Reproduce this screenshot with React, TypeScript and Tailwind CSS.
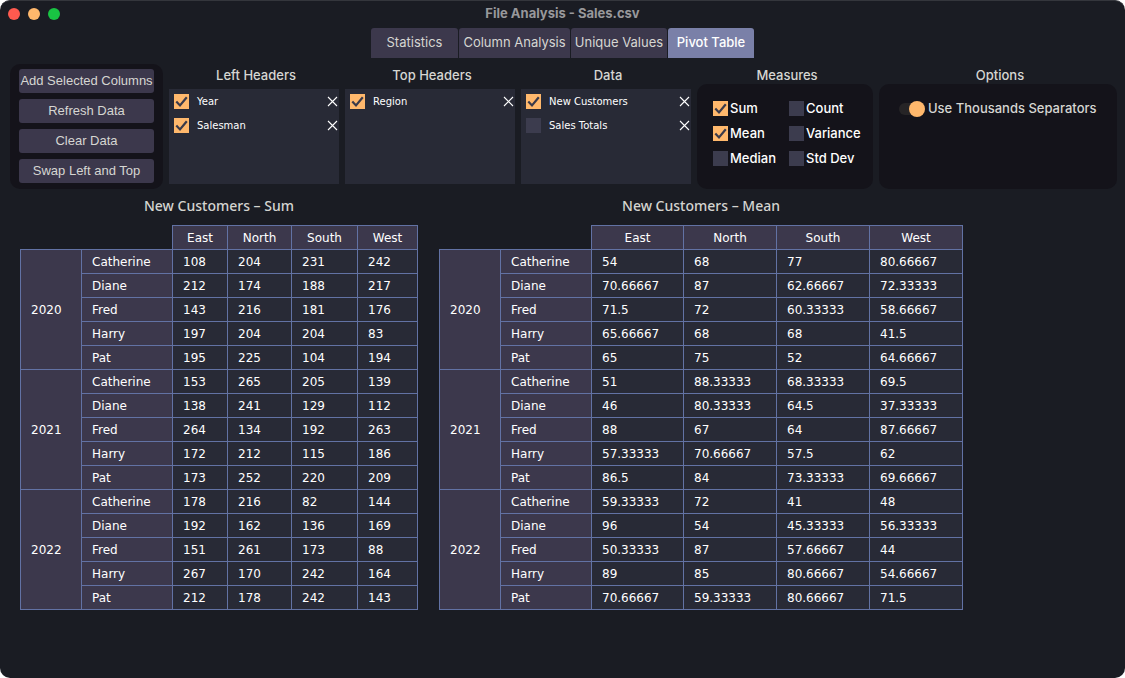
import { Fragment } from "react";

interface Field {
  name: string;
  checked: boolean;
}

interface Group {
  year: string;
  rows: string[][];
}

const REGIONS = ["East", "North", "South", "West"];
const SALESMEN = ["Catherine", "Diane", "Fred", "Harry", "Pat"];

const TABS = [
  { name: "Statistics", width: "w-[87px]" },
  { name: "Column Analysis", width: "w-[111px]" },
  { name: "Unique Values", width: "w-24" },
  { name: "Pivot Table", width: "w-[86px]" },
];

const ACTIONS = ["Add Selected Columns", "Refresh Data", "Clear Data", "Swap Left and Top"];

const FIELD_LISTS: { title: string; fields: Field[] }[] = [
  {
    title: "Left Headers",
    fields: [
      { name: "Year", checked: true },
      { name: "Salesman", checked: true },
    ],
  },
  { title: "Top Headers", fields: [{ name: "Region", checked: true }] },
  {
    title: "Data",
    fields: [
      { name: "New Customers", checked: true },
      { name: "Sales Totals", checked: false },
    ],
  },
];

const MEASURES: Field[] = [
  { name: "Sum", checked: true },
  { name: "Count", checked: false },
  { name: "Mean", checked: true },
  { name: "Variance", checked: false },
  { name: "Median", checked: false },
  { name: "Std Dev", checked: false },
];

const SUMS: Group[] = [
  {
    year: "2020",
    rows: [
      ["108", "204", "231", "242"],
      ["212", "174", "188", "217"],
      ["143", "216", "181", "176"],
      ["197", "204", "204", "83"],
      ["195", "225", "104", "194"],
    ],
  },
  {
    year: "2021",
    rows: [
      ["153", "265", "205", "139"],
      ["138", "241", "129", "112"],
      ["264", "134", "192", "263"],
      ["172", "212", "115", "186"],
      ["173", "252", "220", "209"],
    ],
  },
  {
    year: "2022",
    rows: [
      ["178", "216", "82", "144"],
      ["192", "162", "136", "169"],
      ["151", "261", "173", "88"],
      ["267", "170", "242", "164"],
      ["212", "178", "242", "143"],
    ],
  },
];

const MEANS: Group[] = [
  {
    year: "2020",
    rows: [
      ["54", "68", "77", "80.66667"],
      ["70.66667", "87", "62.66667", "72.33333"],
      ["71.5", "72", "60.33333", "58.66667"],
      ["65.66667", "68", "68", "41.5"],
      ["65", "75", "52", "64.66667"],
    ],
  },
  {
    year: "2021",
    rows: [
      ["51", "88.33333", "68.33333", "69.5"],
      ["46", "80.33333", "64.5", "37.33333"],
      ["88", "67", "64", "87.66667"],
      ["57.33333", "70.66667", "57.5", "62"],
      ["86.5", "84", "73.33333", "69.66667"],
    ],
  },
  {
    year: "2022",
    rows: [
      ["59.33333", "72", "41", "48"],
      ["96", "54", "45.33333", "56.33333"],
      ["50.33333", "87", "57.66667", "44"],
      ["89", "85", "80.66667", "54.66667"],
      ["70.66667", "59.33333", "80.66667", "71.5"],
    ],
  },
];

function Checkbox({ checked }: { checked: boolean }) {
  return (
    <span className="relative block size-[15px] shrink-0">
      <input
        type="checkbox"
        defaultChecked={checked}
        className="peer block size-[15px] appearance-none bg-[#3c3c4e] checked:bg-[#ffb86c]"
      />
      <svg
        viewBox="0 0 15 15"
        className="pointer-events-none absolute inset-0 hidden peer-checked:block"
        fill="none"
        stroke="#3a3a4a"
        strokeWidth="2.2"
      >
        <path d="M2.3 7.4 L6 11.4 L12.8 3.2" />
      </svg>
    </span>
  );
}

function FieldList({ title, fields }: { title: string; fields: Field[] }) {
  return (
    <section className="w-[170px] flex flex-col">
      <h2 className="h-[25px] pl-1 text-center font-medium leading-[22px]">{title}</h2>
      <ul className="h-[95px] bg-[#282a36] font-['DejaVu_Sans',sans-serif] text-[10px] text-white">
        {fields.map((field) => (
          <li key={field.name} className="h-6 flex items-center justify-between pl-[5px] pr-px">
            <label className="flex items-center gap-2">
              <Checkbox checked={field.checked} />
              {field.name}
            </label>
            <button type="button" aria-label={`Remove ${field.name}`}>
              <svg viewBox="0 0 11 11" className="size-[11px]" stroke="currentColor" strokeWidth="1.1">
                <path d="M1 1 L10 10 M10 1 L1 10" />
              </svg>
            </button>
          </li>
        ))}
      </ul>
    </section>
  );
}

function PivotTable({ title, groups, columns }: { title: string; groups: Group[]; columns: string[] }) {
  return (
    <section>
      <h2 className="h-[31px] text-center font-['Noto_Sans',sans-serif] text-[14px] font-medium leading-6 text-[#d4d4d0]">
        {title}
      </h2>
      <table className="table-fixed border-collapse font-['DejaVu_Sans',sans-serif] text-[12px] leading-[22px] text-white">
        <colgroup>
          <col className="w-[61px]" />
          <col className="w-[91px]" />
          {columns.map((width, i) => (
            <col key={i} className={width} />
          ))}
        </colgroup>
        <thead>
          <tr>
            <td colSpan={2} />
            {REGIONS.map((region) => (
              <th key={region} scope="col" className="border border-[#6272a4] bg-[#3c384c] px-0 pt-px pb-0 font-normal">
                {region}
              </th>
            ))}
          </tr>
        </thead>
        <tbody>
          {groups.map((group) => (
            <Fragment key={group.year}>
              {group.rows.map((row, i) => (
                <tr key={i}>
                  {i === 0 && (
                    <th
                      scope="rowgroup"
                      rowSpan={group.rows.length}
                      className="border border-[#6272a4] bg-[#3c384c] px-[10px] pt-px pb-0 text-left font-normal"
                    >
                      {group.year}
                    </th>
                  )}
                  <th
                    scope="row"
                    className="border border-[#6272a4] bg-[#3c384c] px-[10px] pt-px pb-0 text-left font-normal"
                  >
                    {SALESMEN[i]}
                  </th>
                  {row.map((value, j) => (
                    <td key={j} className="border border-[#6272a4] bg-[#282a36] px-[10px] pt-px pb-0">
                      {value}
                    </td>
                  ))}
                </tr>
              ))}
            </Fragment>
          ))}
        </tbody>
      </table>
    </section>
  );
}

export default function App() {
  return (
    <div className="min-h-screen bg-white">
      <main className="min-h-screen rounded-[10px] border-t border-[#34363c] bg-[#1a1c23] font-[Inter,sans-serif] text-[13px] text-[#d6d6d2]">
        <header className="h-[27px] grid grid-cols-[1fr_auto_1fr] items-center px-2 pb-px">
          <div className="flex gap-2">
            <button type="button" aria-label="Close" className="size-3 rounded-full bg-[#ff5a4f]" />
            <button type="button" aria-label="Minimize" className="size-3 rounded-full bg-[#ffb86c]" />
            <button type="button" aria-label="Zoom" className="size-3 rounded-full bg-[#19c443]" />
          </div>
          <h1 className="text-[13px] font-bold text-[#98989b]">File Analysis - Sales.csv</h1>
        </header>

        <nav className="flex justify-center gap-px">
          {TABS.map((tab) => (
            <button
              key={tab.name}
              type="button"
              className={`${tab.width} h-[30px] rounded-t-[3px] whitespace-nowrap ${
                tab.name === "Pivot Table" ? "bg-[#7a80a8] font-medium text-white" : "bg-[#3c384c]"
              }`}
            >
              {tab.name}
            </button>
          ))}
        </nav>

        <div className="flex gap-[6px] pt-[6px] pl-[10px] pr-2">
          <div className="w-[153px] h-[125px] flex flex-col gap-[6px] rounded-[10px] bg-[#14131a] px-[9px] py-[5px]">
            {ACTIONS.map((action) => (
              <button
                key={action}
                type="button"
                className="h-6 rounded-[3px] bg-[#3c384c] font-['Liberation_Sans',sans-serif] whitespace-nowrap"
              >
                {action}
              </button>
            ))}
          </div>

          {FIELD_LISTS.map((list) => (
            <FieldList key={list.title} title={list.title} fields={list.fields} />
          ))}

          <section className="w-44">
            <h2 className="h-5 pl-1 text-center font-medium leading-[22px]">Measures</h2>
            <div className="h-[105px] grid grid-cols-[76px_1fr] content-start rounded-[10px] bg-[#14131a] pt-3 pl-4 font-medium text-white">
              {MEASURES.map((measure) => (
                <label key={measure.name} className="h-[25px] flex items-center gap-[2px] whitespace-nowrap">
                  <Checkbox checked={measure.checked} />
                  <span className="pt-px">{measure.name}</span>
                </label>
              ))}
            </div>
          </section>

          <section className="flex-1">
            <h2 className="h-5 pl-1 text-center font-medium leading-[22px]">Options</h2>
            <div className="h-[105px] rounded-[10px] bg-[#14131a] pt-3 pl-5">
              <label className="h-[25px] flex items-center gap-[3px] font-medium whitespace-nowrap">
                <span className="relative block w-[26px] h-4 shrink-0">
                  <input
                    type="checkbox"
                    role="switch"
                    defaultChecked
                    className="peer block w-[26px] h-3 mt-[2px] appearance-none rounded-full bg-[#262426]"
                  />
                  <span className="pointer-events-none absolute top-0 left-0 size-4 rounded-full bg-[#ffb86c] peer-checked:left-[10px]" />
                </span>
                <span className="pt-px">Use Thousands Separators</span>
              </label>
            </div>
          </section>
        </div>

        <div className="flex flex-wrap gap-[21px] pt-[5px] px-5">
          <PivotTable
            title="New Customers – Sum"
            groups={SUMS}
            columns={["w-[55px]", "w-[64px]", "w-[66px]", "w-[60px]"]}
          />
          <PivotTable
            title="New Customers – Mean"
            groups={MEANS}
            columns={["w-[92px]", "w-[93px]", "w-[93px]", "w-[93px]"]}
          />
        </div>
      </main>
    </div>
  );
}
